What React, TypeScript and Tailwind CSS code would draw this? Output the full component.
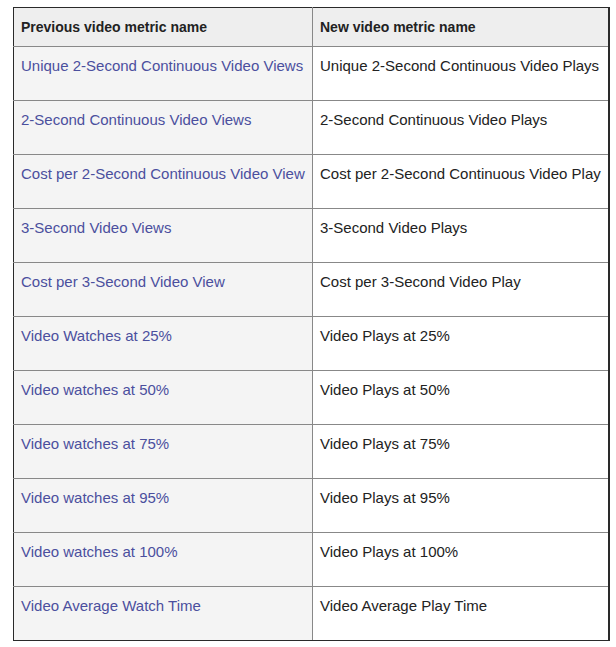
const rows: [string, string][] = [
  ["Unique 2-Second Continuous Video Views", "Unique 2-Second Continuous Video Plays"],
  ["2-Second Continuous Video Views", "2-Second Continuous Video Plays"],
  ["Cost per 2-Second Continuous Video View", "Cost per 2-Second Continuous Video Play"],
  ["3-Second Video Views", "3-Second Video Plays"],
  ["Cost per 3-Second Video View", "Cost per 3-Second Video Play"],
  ["Video Watches at 25%", "Video Plays at 25%"],
  ["Video watches at 50%", "Video Plays at 50%"],
  ["Video watches at 75%", "Video Plays at 75%"],
  ["Video watches at 95%", "Video Plays at 95%"],
  ["Video watches at 100%", "Video Plays at 100%"],
  ["Video Average Watch Time", "Video Average Play Time"],
];

const cell =
  "border border-[#888] px-[7px] first:border-l-[#2a2a2a] last:border-r-2 last:border-r-[#2a2a2a]";

export default function App() {
  return (
    <div className="min-h-[647px] bg-white pl-[13px] pt-[7px] font-['Liberation_Sans',Arial,sans-serif]">
      <table className="w-[597px] table-fixed border-collapse text-[15px] leading-[22px]">
        <colgroup>
          <col className="w-[299px]" />
          <col />
        </colgroup>
        <thead>
          <tr className="h-[39px] bg-[#eeeeee]">
            <th className={`${cell} border-t-[#2a2a2a] pb-[1px] text-left align-middle text-[14px] font-bold text-[#222]`}>
              Previous video metric name
            </th>
            <th className={`${cell} border-t-[#2a2a2a] pb-[1px] text-left align-middle text-[14px] font-bold text-[#222]`}>
              New video metric name
            </th>
          </tr>
        </thead>
        <tbody>
          {rows.map(([prev, next], i) => {
            const bottom = i === rows.length - 1 ? "border-b-[#2a2a2a]" : "";
            return (
              <tr key={prev} className="h-[54px]">
                <td className={`${cell} ${bottom} bg-[#f4f4f4] pt-[8px] align-top text-[#4b4f9e]`}>
                  {prev}
                </td>
                <td className={`${cell} ${bottom} bg-white pt-[8px] align-top text-[#222]`}>
                  {next}
                </td>
              </tr>
            );
          })}
        </tbody>
      </table>
    </div>
  );
}
